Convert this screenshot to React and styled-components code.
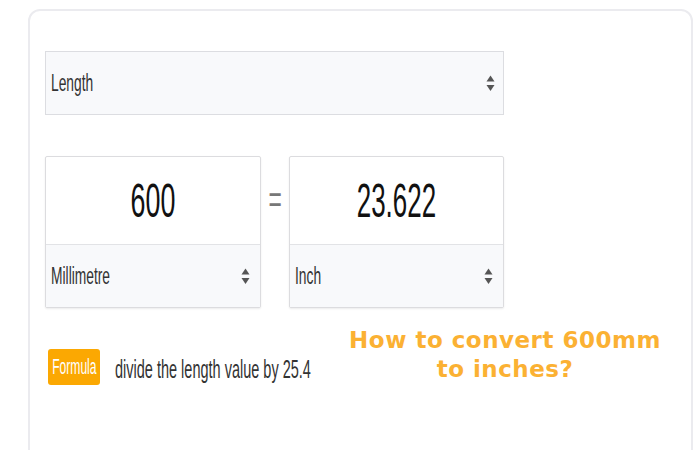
import React from "react";
import styled, { createGlobalStyle } from "styled-components";

const Global = createGlobalStyle`
  html, body { margin: 0; padding: 0; background: #ffffff; }
  body { font-family: "Liberation Sans", Arial, sans-serif; overflow: hidden; }
`;

const Page = styled.div`
  width: 700px;
  height: 450px;
  padding: 9px 0 0 28px;
  box-sizing: border-box;
  overflow: hidden;
`;

const Card = styled.div`
  width: 665px;
  height: 460px;
  box-sizing: border-box;
  border: 2px solid #ebebef;
  border-radius: 12px;
  padding: 40px 0 0 15px;
  display: flex;
  flex-direction: column;
`;

const Squeeze = styled.span`
  display: inline-block;
  white-space: nowrap;
  transform: scaleX(${(p) => p.$sx || 0.6});
  transform-origin: ${(p) => p.$origin || "left center"};
  font-size: ${(p) => p.$size || 22}px;
  color: ${(p) => p.$color || "#333"};
  line-height: 1;
`;

const Select = styled.div`
  width: 459px;
  height: 64px;
  box-sizing: border-box;
  border: 1px solid #dcdde1;
  background: #f8f9fb;
  display: flex;
  align-items: center;
  justify-content: space-between;
  padding: 0 8px 0 5px;
`;

const UnitSelect = styled(Select)`
  width: auto;
  height: 63px;
  border: none;
  border-top: 1px solid #e2e3e6;
  padding: 0 10px 0 5px;
`;

const Arrows = () => (
  <svg width="9" height="17" viewBox="0 0 9 17">
    <polygon points="4.5,0.5 8.5,6.5 0.5,6.5" fill="#555" />
    <polygon points="0.5,10 8.5,10 4.5,16" fill="#555" />
  </svg>
);

const ConvertRow = styled.div`
  margin-top: 41px;
  display: flex;
  align-items: flex-start;
  width: 459px;
`;

const UnitBox = styled.div`
  width: ${(p) => p.$w}px;
  box-sizing: border-box;
  border: 1px solid #dcdcdf;
  border-radius: 2px;
  box-shadow: 0 1px 2px rgba(0, 0, 0, 0.08);
  display: flex;
  flex-direction: column;
  background: #fff;
`;

const NumberArea = styled.div`
  height: 87px;
  display: flex;
  align-items: center;
  justify-content: center;
  overflow: visible;
`;

const Equals = styled.div`
  width: 28px;
  height: 88px;
  display: flex;
  align-items: center;
  justify-content: center;
`;

const BottomRow = styled.div`
  margin-top: 19px;
  display: grid;
  grid-template-columns: 287px 340px;
  padding-left: 3px;
`;

const FormulaLine = styled.div`
  margin-top: 22px;
  display: flex;
  align-items: center;
  gap: 15px;
  min-width: 0;
`;

const Badge = styled.div`
  flex: 0 0 auto;
  width: 52px;
  height: 36px;
  border-radius: 3px;
  background: #fba802;
  display: flex;
  align-items: center;
  justify-content: center;
`;

const FormulaText = styled.div`
  width: 200px;
  display: flex;
  align-items: center;
  padding-top: 4px;
`;

const Heading = styled.div`
  font-family: "DejaVu Sans", sans-serif;
  font-weight: bold;
  font-size: 23px;
  line-height: 29px;
  color: #fbb133;
  text-align: center;
  letter-spacing: 0.5px;
  margin-top: -1px;
`;

export default function App() {
  return (
    <>
      <Global />
      <Page>
        <Card>
          <Select>
            <Squeeze $size={23} $sx={0.6}>Length</Squeeze>
            <Arrows />
          </Select>
          <ConvertRow>
            <UnitBox $w={216}>
              <NumberArea>
                <Squeeze $size={48} $sx={0.56} $origin="center" $color="#111">600</Squeeze>
              </NumberArea>
              <UnitSelect>
                <Squeeze $size={23} $sx={0.6}>Millimetre</Squeeze>
                <Arrows />
              </UnitSelect>
            </UnitBox>
            <Equals>
              <Squeeze $size={38} $sx={0.6} $origin="center" $color="#777">=</Squeeze>
            </Equals>
            <UnitBox $w={215}>
              <NumberArea>
                <Squeeze $size={48} $sx={0.54} $origin="center" $color="#111">23.622</Squeeze>
              </NumberArea>
              <UnitSelect>
                <Squeeze $size={23} $sx={0.6}>Inch</Squeeze>
                <Arrows />
              </UnitSelect>
            </UnitBox>
          </ConvertRow>
          <BottomRow>
            <FormulaLine>
              <Badge>
                <Squeeze $size={22} $sx={0.55} $origin="center" $color="#fff">Formula</Squeeze>
              </Badge>
              <FormulaText>
                <Squeeze $size={25} $sx={0.58}>divide the length value by 25.4</Squeeze>
              </FormulaText>
            </FormulaLine>
            <Heading>
              How to convert 600mm
              <br />
              to inches?
            </Heading>
          </BottomRow>
        </Card>
      </Page>
    </>
  );
}
